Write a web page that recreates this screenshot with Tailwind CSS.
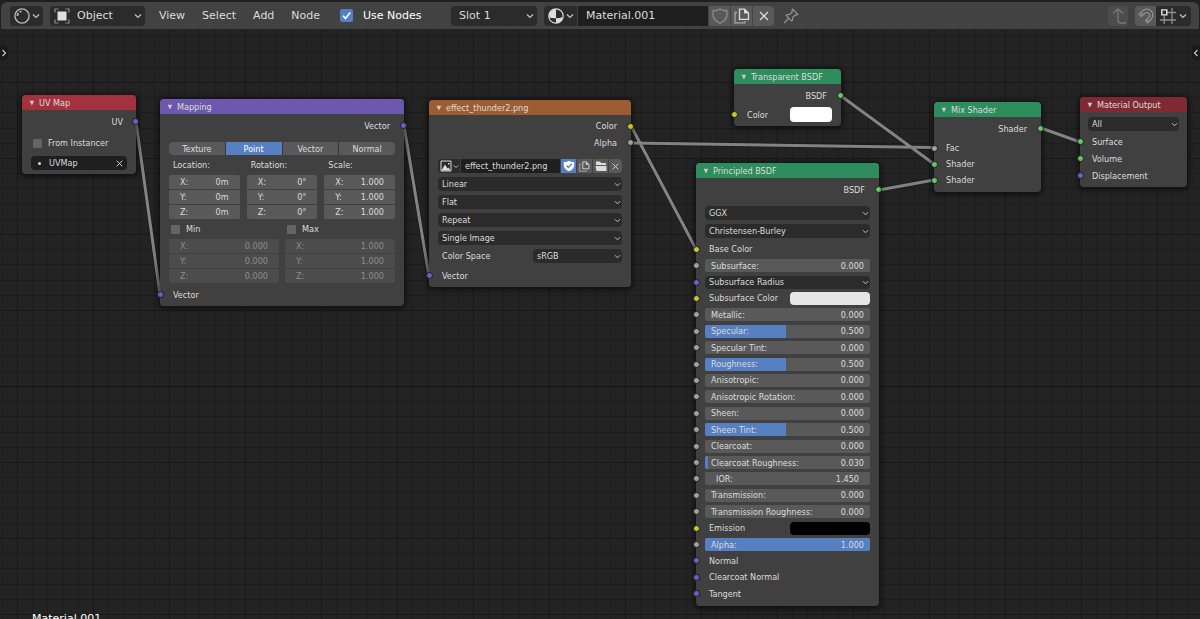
<!DOCTYPE html>
<html lang="en">
<head>
    <meta charset="UTF-8">
    <meta name="viewport" content="width=device-width, initial-scale=1.0">
    <title>Shader Editor</title>
    <script src="https://cdn.jsdelivr.net/npm/@tailwindcss/browser@4"></script>
</head>
<body class="h-screen flex flex-col overflow-hidden bg-[#1f1f1f] font-['DejaVu_Sans',sans-serif] text-[11px] leading-4 text-[#dcdcdc]">

    <!-- shared icons -->
    <svg class="hidden">
        <symbol id="chev" viewBox="0 0 8 6"><path d="M1 1.5 4 4.5 7 1.5" fill="none" stroke="#c4c4c4" stroke-width="1.2"/></symbol>
        <symbol id="tri" viewBox="0 0 6 6"><path d="M.6.8h4.6L2.9 5.4z" fill="currentColor"/></symbol>
        <symbol id="cross" viewBox="0 0 10 10"><path d="M1 1 9 9M9 1 1 9" fill="none" stroke="currentColor" stroke-width="1.3"/></symbol>
        <symbol id="copy" viewBox="0 0 16 16"><path d="M5.5 1.2h5l4 3.8v6.3h-9z" fill="none" stroke="currentColor" stroke-width="1.3"/><path d="M10 1v4.6h4.6z" fill="currentColor"/><path d="M3.2 4.5H1v10.3h9.8v-1.6" fill="none" stroke="#a8a8a8" stroke-width="1.3"/></symbol>
        <symbol id="shield" viewBox="0 0 16 16"><path d="M8 .9C6.200 2.300 3.600 2.800 1.100 2.700v4.400c0 3.600 2.900 6.600 6.900 8 4-1.400 6.900-4.400 6.900-8V2.700C12.400 2.800 9.800 2.300 8 .9z"/></symbol>
    </svg>

    <header class="mt-[2px] ml-px mr-px h-[27px] shrink-0 flex items-center pl-[9px] pr-2 rounded-t-md bg-[#424242]">
        <button aria-label="Editor type" class="h-5 w-[33px] flex items-center justify-center gap-[2px] rounded bg-[#2b2b2b]">
            <svg class="size-4" viewBox="0 0 16 16" fill="none" stroke="#b8b8b8"><circle cx="8" cy="8" r="7.1" stroke-width="1.4"/><path d="M3.400 8.100c0-1.300.4-2.200 1-3" stroke-width="1.700"/><path d="M5.800 4.100 7.500 3.300" stroke-width="1.700"/></svg>
            <svg class="w-2 h-[6px]"><use href="#chev"/></svg>
        </button>

        <div class="relative ml-[7px] w-[95px]">
            <svg class="absolute left-1 top-[2px] size-4 pointer-events-none" viewBox="0 0 16 16"><path d="M1 4.500V1h3.500M11.500 1H15v3.500M15 11.500V15h-3.500M4.500 15H1v-3.500" fill="none" stroke="#8c8c8c" stroke-width="1.200"/><path d="M3.500 3.500h9v9h-9z" fill="#dedede"/></svg>
            <select aria-label="Shader type" class="block appearance-none h-5 w-full pl-[27px] rounded bg-[#2b2b2b]"><option>Object</option></select>
            <svg class="absolute right-[3px] top-[7px] w-2 h-[6px] pointer-events-none"><use href="#chev"/></svg>
        </div>

        <nav class="ml-[14px] flex gap-[17px]">
            <button>View</button>
            <button>Select</button>
            <button>Add</button>
            <button>Node</button>
        </nav>

        <label class="ml-5 w-[111px] flex items-center gap-[10px] text-white">
            <span class="relative flex">
                <input type="checkbox" checked class="peer appearance-none size-[13px] rounded-xs bg-[#656565] checked:bg-[#5680c2]">
                <svg class="absolute inset-0 size-[13px] pointer-events-none" viewBox="0 0 13 13"><path d="M3 6.800 5.400 9.400 10.200 3.400" fill="none" stroke="white" stroke-width="1.600"/></svg>
            </span>
            Use Nodes
        </label>

        <div class="relative w-[86px]">
            <select aria-label="Slot" class="block appearance-none h-5 w-full pl-2 rounded bg-[#2b2b2b]"><option>Slot 1</option></select>
            <svg class="absolute right-[3px] top-[7px] w-2 h-[6px] pointer-events-none"><use href="#chev"/></svg>
        </div>

        <div class="ml-[7px] h-5 flex gap-px rounded overflow-hidden">
            <button aria-label="Browse material" class="w-[33px] flex items-center justify-center gap-[2px] bg-[#2b2b2b]">
                <svg class="size-4" viewBox="0 0 16 16"><circle cx="8" cy="8" r="7.200" fill="#2b2b2b" stroke="#dedede" stroke-width="1.200"/><path d="M8 1A7 7 0 0 0 1.400 9.500Q4 10.500 8 10.300zM8 10.300Q12 10.300 14.600 9A7 7 0 0 1 8 15z" fill="#dedede"/></svg>
                <svg class="w-2 h-[6px]"><use href="#chev"/></svg>
            </button>
            <input aria-label="Material name" value="Material.001" class="w-[130px] pl-2 bg-[#1f1f1f]">
            <button aria-label="Fake user" class="w-[21px] flex items-center justify-center bg-[#595959] text-[#8c8c8c]"><svg class="size-4 fill-none stroke-current stroke-[1.3]"><use href="#shield"/></svg></button>
            <button aria-label="New material" class="w-[21px] flex items-center justify-center bg-[#595959]"><svg class="size-4"><use href="#copy"/></svg></button>
            <button aria-label="Unlink material" class="w-[21px] flex items-center justify-center bg-[#595959]"><svg class="size-[10px]"><use href="#cross"/></svg></button>
        </div>

        <button aria-label="Pin" class="ml-[9px] text-[#8f8f8f]">
            <svg class="block size-4" viewBox="0 0 16 16" fill="none" stroke="currentColor" stroke-width="1.300"><path d="M9.700 1.200 14.800 6.300 13.300 7.100 12.300 6.800 9.800 9.400 9.500 12.200 8.500 12.900 3.200 7.500 4 6.600 6.800 6.300 9.300 3.700 9 2.400zM5.800 10.200 1 15"/></svg>
        </button>

        <button aria-label="Parent node tree" class="ml-auto h-5 w-5 flex items-center justify-center rounded bg-[#4d4d4d] text-[#777]">
            <svg class="size-4" viewBox="0 0 16 16" fill="none" stroke="currentColor" stroke-width="1.300"><path d="M3 5.500 8 .9 13 5.500M8 1v11q0 3 3 3h5"/></svg>
        </button>
        <div class="ml-[7px] h-5 flex rounded overflow-hidden">
            <button aria-label="Snap" class="w-[21px] flex items-center justify-center bg-[#595959]">
                <svg class="size-4" viewBox="0 0 16 16" fill="none" stroke="#939393" stroke-width="1.200"><path d="M1.200 6.200 4.500 2.900C10-2.200 18.200 4.600 13.200 11L9.700 14.800 7.600 12.700 10.900 9.100C13 6.500 9.600 3.200 7 5.200L3.300 8.400z"/><path d="M8.800 11.400 11 13.500M3.100 4.300 5.200 6.700"/></svg>
            </button>
            <button aria-label="Snap target" class="w-[35px] flex items-center justify-center gap-[3px] bg-[#2b2b2b]">
                <svg class="size-4" viewBox="0 0 16 16" fill="none"><path d="M7 4.500h9M0 12h16M4.200 7.500V16M12 0v16" stroke="#8f8f8f" stroke-width="1.300"/><path d="M1.800 1.900h5v5h-5z" stroke="#e6e6e6" stroke-width="1.400"/></svg>
                <svg class="w-2 h-[6px]"><use href="#chev"/></svg>
            </button>
        </div>
    </header>

    <!-- node canvas -->
    <main class="relative flex-1 overflow-hidden bg-[#232323] font-['DejaVu_Sans_Condensed','DejaVu_Sans',sans-serif] text-[9px] leading-3">
        <svg class="absolute inset-0 w-full h-full">
            <defs>
                <pattern id="grid" x="17" y="53" width="76" height="76" patternUnits="userSpaceOnUse">
                    <path d="M15.500 0v76M30.500 0v76M46.500 0v76M61.500 0v76M0 15.500h76M0 30.500h76M0 46.500h76M0 61.500h76" stroke="#1d1d1d"/>
                    <path d="M.5 0v76M0 .5h76" stroke="#181818"/>
                </pattern>
            </defs>
            <rect width="100%" height="100%" fill="url(#grid)"/>
            <path d="M0 357.500h1200" stroke="#141414"/>
            <!-- links: dark outline, then the wire -->
            <path d="M136 93 160 265M404 97 429 247M631 97 696 220M631 114 934 118.500M841 67 934 135M879 161 934 151M1041 99 1080 113" fill="none" stroke="#1a1a1a" stroke-width="4.500"/>
            <path d="M136 93 160 265M404 97 429 247M631 97 696 220M631 114 934 118.500M841 67 934 135M879 161 934 151M1041 99 1080 113" fill="none" stroke="#838383" stroke-width="3"/>
        </svg>

        <button aria-label="Show toolbar" class="absolute left-0 top-4 h-[15px] w-2 flex items-center rounded-r bg-[#1a1a1a]"><svg class="w-2 h-[6px] -rotate-90"><use href="#chev"/></svg></button>
        <button aria-label="Show sidebar" class="absolute right-0 top-4 h-[15px] w-2 flex items-center rounded-l bg-[#1a1a1a]"><svg class="w-2 h-[6px] rotate-90"><use href="#chev"/></svg></button>

        <!-- UV Map -->
        <section class="absolute left-[22px] top-[66px] w-[114px] pb-1 rounded bg-[#424242]/95 shadow-[0_1px_5px_2px_#0008]">
            <h2 class="h-[15px] flex items-center gap-1 pl-[7px] rounded-t bg-[#a3323e]"><svg class="size-[6px] text-[#ccc]"><use href="#tri"/></svg>UV Map</h2>
            <div class="relative h-[23px] flex items-center justify-end pr-[13px]">UV<i class="absolute -right-[3px] size-[7px] rounded-full border border-[#1c1c1c] bg-[#6363c7]"></i></div>
            <label class="h-5 flex items-center gap-[6px] pl-[11px]"><input type="checkbox" class="appearance-none size-[9px] rounded-[1px] bg-[#656565]">From Instancer</label>
            <div class="mt-[3px] mx-[9px] h-[14px] flex items-center rounded bg-[#1f1f1f] pl-[7px] pr-1">
                <span class="size-[3px] rounded-full bg-[#ddd]"></span>
                <input aria-label="UV map" value="UVMap" class="flex-1 min-w-0 pl-2">
                <button aria-label="Clear UV map"><svg class="block size-[7px]"><use href="#cross"/></svg></button>
            </div>
        </section>

        <!-- Mapping -->
        <section class="absolute left-[160px] top-[70px] w-[244px] rounded bg-[#424242]/95 shadow-[0_1px_5px_2px_#0008]">
            <h2 class="h-[15px] flex items-center gap-1 pl-[7px] rounded-t bg-[#6e58ad]"><svg class="size-[6px] text-[#ccc]"><use href="#tri"/></svg>Mapping</h2>
            <div class="relative h-[23px] flex items-center justify-end pr-[14px]">Vector<i class="absolute -right-[3px] size-[7px] rounded-full border border-[#1c1c1c] bg-[#6363c7]"></i></div>
            <div class="mt-[5px] mx-[9px] h-[13px] grid grid-cols-4 gap-px rounded overflow-hidden bg-[#383838]">
                <button class="bg-[#595959]">Texture</button>
                <button class="bg-[#5680c2] text-white">Point</button>
                <button class="bg-[#595959]">Vector</button>
                <button class="bg-[#595959]">Normal</button>
            </div>
            <div class="mx-[9px] grid grid-cols-3 gap-[7px]">
                <fieldset class="min-w-0">
                    <legend class="h-5 pl-1 leading-5">Location:</legend>
                    <div class="flex flex-col gap-px rounded-xs overflow-hidden">
                        <label class="h-[14px] flex items-center px-[11px] bg-[#595959]">X:<input value="0m" class="flex-1 min-w-0 text-right"></label>
                        <label class="h-[14px] flex items-center px-[11px] bg-[#595959]">Y:<input value="0m" class="flex-1 min-w-0 text-right"></label>
                        <label class="h-[14px] flex items-center px-[11px] bg-[#595959]">Z:<input value="0m" class="flex-1 min-w-0 text-right"></label>
                    </div>
                </fieldset>
                <fieldset class="min-w-0">
                    <legend class="h-5 pl-1 leading-5">Rotation:</legend>
                    <div class="flex flex-col gap-px rounded-xs overflow-hidden">
                        <label class="h-[14px] flex items-center px-[11px] bg-[#595959]">X:<input value="0°" class="flex-1 min-w-0 text-right"></label>
                        <label class="h-[14px] flex items-center px-[11px] bg-[#595959]">Y:<input value="0°" class="flex-1 min-w-0 text-right"></label>
                        <label class="h-[14px] flex items-center px-[11px] bg-[#595959]">Z:<input value="0°" class="flex-1 min-w-0 text-right"></label>
                    </div>
                </fieldset>
                <fieldset class="min-w-0">
                    <legend class="h-5 pl-1 leading-5">Scale:</legend>
                    <div class="flex flex-col gap-px rounded-xs overflow-hidden">
                        <label class="h-[14px] flex items-center px-[11px] bg-[#595959]">X:<input value="1.000" class="flex-1 min-w-0 text-right"></label>
                        <label class="h-[14px] flex items-center px-[11px] bg-[#595959]">Y:<input value="1.000" class="flex-1 min-w-0 text-right"></label>
                        <label class="h-[14px] flex items-center px-[11px] bg-[#595959]">Z:<input value="1.000" class="flex-1 min-w-0 text-right"></label>
                    </div>
                </fieldset>
            </div>
            <div class="mx-[9px] grid grid-cols-2 gap-x-[6px]">
                <div>
                    <label class="h-5 flex items-center gap-[6px] pl-[2px]"><input type="checkbox" class="appearance-none size-[9px] rounded-[1px] bg-[#656565]">Min</label>
                    <div class="flex flex-col gap-px rounded-xs overflow-hidden text-[#8c8c8c]">
                        <label class="h-[14px] flex items-center px-[11px] bg-[#4c4c4c]">X:<input disabled value="0.000" class="flex-1 min-w-0 text-right"></label>
                        <label class="h-[14px] flex items-center px-[11px] bg-[#4c4c4c]">Y:<input disabled value="0.000" class="flex-1 min-w-0 text-right"></label>
                        <label class="h-[14px] flex items-center px-[11px] bg-[#4c4c4c]">Z:<input disabled value="0.000" class="flex-1 min-w-0 text-right"></label>
                    </div>
                </div>
                <div>
                    <label class="h-5 flex items-center gap-[6px] pl-[2px]"><input type="checkbox" class="appearance-none size-[9px] rounded-[1px] bg-[#656565]">Max</label>
                    <div class="flex flex-col gap-px rounded-xs overflow-hidden text-[#8c8c8c]">
                        <label class="h-[14px] flex items-center px-[11px] bg-[#4c4c4c]">X:<input disabled value="1.000" class="flex-1 min-w-0 text-right"></label>
                        <label class="h-[14px] flex items-center px-[11px] bg-[#4c4c4c]">Y:<input disabled value="1.000" class="flex-1 min-w-0 text-right"></label>
                        <label class="h-[14px] flex items-center px-[11px] bg-[#4c4c4c]">Z:<input disabled value="1.000" class="flex-1 min-w-0 text-right"></label>
                    </div>
                </div>
            </div>
            <div class="relative h-[23px] flex items-center pl-[13px]"><i class="absolute -left-[3px] size-[7px] rounded-full border border-[#1c1c1c] bg-[#6363c7]"></i>Vector</div>
        </section>

        <!-- Image texture -->
        <section class="absolute left-[429px] top-[71px] w-[202px] pb-[3px] rounded bg-[#424242]/95 shadow-[0_1px_5px_2px_#0008]">
            <h2 class="h-[15px] flex items-center gap-1 pl-[7px] rounded-t bg-[#9c5d33]"><svg class="size-[6px] text-[#ccc]"><use href="#tri"/></svg>effect_thunder2.png</h2>
            <div class="pt-[3px]">
                <div class="relative h-4 flex items-center justify-end pr-[14px]">Color<i class="absolute -right-[3px] size-[7px] rounded-full border border-[#1c1c1c] bg-[#c7c729]"></i></div>
                <div class="relative h-[17px] flex items-center justify-end pr-[14px]">Alpha<i class="absolute -right-[3px] size-[7px] rounded-full border border-[#1c1c1c] bg-[#a1a1a1]"></i></div>
            </div>
            <div class="mt-2 mx-[9px] flex flex-col gap-1">
                <div class="h-[14px] flex gap-px rounded overflow-hidden">
                    <button aria-label="Browse image" class="w-[22px] flex items-center justify-center gap-px bg-[#2b2b2b]">
                        <svg class="size-3" viewBox="0 0 12 12"><path d="M1 1h10v10H1z" fill="none" stroke="#ddd"/><path d="M1.500 10.500 5 4.500 7.500 8.500 8.500 7.500 10.500 10.500zM8 3h1.500v1.500H8z" fill="#ddd"/></svg>
                        <svg class="w-[6px] h-[5px]"><use href="#chev"/></svg>
                    </button>
                    <input aria-label="Image name" value="effect_thunder2.png" class="flex-1 min-w-0 pl-1 bg-[#1f1f1f]">
                    <button aria-label="Fake user" class="w-[15px] flex items-center justify-center bg-[#5680c2] text-white"><svg class="size-3 fill-current" viewBox="0 0 12 12"><use href="#shield" width="12" height="12"/><path d="M3.500 5.500 5.400 7.500 8.700 3.700" fill="none" stroke="#5680c2" stroke-width="1.300"/></svg></button>
                    <button aria-label="New image" class="w-[15px] flex items-center justify-center bg-[#595959]"><svg class="size-[11px]"><use href="#copy"/></svg></button>
                    <button aria-label="Open image" class="w-[15px] flex items-center justify-center bg-[#595959]"><svg class="size-3" viewBox="0 0 12 12"><path d="M1 5V1.500h4L6 3h5v2zM.5 6h11v5h-10z" fill="#ddd"/></svg></button>
                    <button aria-label="Unlink image" class="w-[13px] flex items-center justify-center bg-[#595959]"><svg class="size-[7px]"><use href="#cross"/></svg></button>
                </div>
                <div class="relative">
                    <select aria-label="Interpolation" class="block appearance-none h-[14px] w-full pl-1 rounded bg-[#2b2b2b]"><option>Linear</option></select>
                    <svg class="absolute right-[1px] top-[5px] w-[7px] h-[5px] pointer-events-none"><use href="#chev"/></svg>
                </div>
                <div class="relative">
                    <select aria-label="Projection" class="block appearance-none h-[14px] w-full pl-1 rounded bg-[#2b2b2b]"><option>Flat</option></select>
                    <svg class="absolute right-[1px] top-[5px] w-[7px] h-[5px] pointer-events-none"><use href="#chev"/></svg>
                </div>
                <div class="relative">
                    <select aria-label="Extension" class="block appearance-none h-[14px] w-full pl-1 rounded bg-[#2b2b2b]"><option>Repeat</option></select>
                    <svg class="absolute right-[1px] top-[5px] w-[7px] h-[5px] pointer-events-none"><use href="#chev"/></svg>
                </div>
                <div class="relative">
                    <select aria-label="Source" class="block appearance-none h-[14px] w-full pl-1 rounded bg-[#2b2b2b]"><option>Single Image</option></select>
                    <svg class="absolute right-[1px] top-[5px] w-[7px] h-[5px] pointer-events-none"><use href="#chev"/></svg>
                </div>
                <div class="flex items-center justify-between pl-1">
                    <label for="colorspace">Color Space</label>
                    <div class="relative w-[89px]">
                        <select id="colorspace" class="block appearance-none h-[14px] w-full pl-1 rounded bg-[#2b2b2b]"><option>sRGB</option></select>
                        <svg class="absolute right-[1px] top-[5px] w-[7px] h-[5px] pointer-events-none"><use href="#chev"/></svg>
                    </div>
                </div>
            </div>
            <div class="relative mt-1 h-[17px] flex items-center pl-[13px]"><i class="absolute -left-[3px] size-[7px] rounded-full border border-[#1c1c1c] bg-[#6363c7]"></i>Vector</div>
        </section>

        <!-- Transparent BSDF -->
        <section class="absolute left-[734px] top-[40px] w-[107px] pb-1 rounded bg-[#424242]/95 shadow-[0_1px_5px_2px_#0008]">
            <h2 class="h-[15px] flex items-center gap-1 pl-[7px] rounded-t bg-[#2d8d5c]"><svg class="size-[6px] text-[#ccc]"><use href="#tri"/></svg>Transparent BSDF</h2>
            <div class="relative h-[23px] flex items-center justify-end pr-[14px]">BSDF<i class="absolute -right-[3px] size-[7px] rounded-full border border-[#1c1c1c] bg-[#63c763]"></i></div>
            <div class="relative h-[15px] flex items-center justify-between pl-[13px] pr-[9px]"><i class="absolute -left-[3px] size-[7px] rounded-full border border-[#1c1c1c] bg-[#c7c729]"></i>Color<button aria-label="Pick color" class="w-[42px] h-[15px] rounded bg-white"></button></div>
        </section>

        <!-- Principled BSDF -->
        <section class="absolute left-[696px] top-[134px] w-[183px] pb-1 rounded bg-[#424242]/95 shadow-[0_1px_5px_2px_#0008]">
            <h2 class="h-[15px] flex items-center gap-1 pl-[7px] rounded-t bg-[#2d8d5c]"><svg class="size-[6px] text-[#ccc]"><use href="#tri"/></svg>Principled BSDF</h2>
            <div class="relative h-[23px] flex items-center justify-end pr-[14px]">BSDF<i class="absolute -right-[3px] size-[7px] rounded-full border border-[#1c1c1c] bg-[#63c763]"></i></div>
            <div class="mt-[5px] mb-[3px] mx-[9px] flex flex-col gap-1">
                <div class="relative">
                    <select aria-label="Distribution" class="block appearance-none h-[14px] w-full pl-1 rounded bg-[#2b2b2b]"><option>GGX</option></select>
                    <svg class="absolute right-[1px] top-[5px] w-[7px] h-[5px] pointer-events-none"><use href="#chev"/></svg>
                </div>
                <div class="relative">
                    <select aria-label="Subsurface method" class="block appearance-none h-[14px] w-full pl-1 rounded bg-[#2b2b2b]"><option>Christensen-Burley</option></select>
                    <svg class="absolute right-[1px] top-[5px] w-[7px] h-[5px] pointer-events-none"><use href="#chev"/></svg>
                </div>
            </div>
            <!-- socket rows share the height equally -->
            <div id="inputs" class="h-[361px] grid grid-cols-1 auto-rows-fr"></div>
        </section>

        <!-- Mix Shader -->
        <section class="absolute left-[934px] top-[73px] w-[107px] pb-1 rounded bg-[#424242]/95 shadow-[0_1px_5px_2px_#0008]">
            <h2 class="h-[15px] flex items-center gap-1 pl-[7px] rounded-t bg-[#2d8d5c]"><svg class="size-[6px] text-[#ccc]"><use href="#tri"/></svg>Mix Shader</h2>
            <div class="relative h-[23px] flex items-center justify-end pr-[14px]">Shader<i class="absolute -right-[3px] size-[7px] rounded-full border border-[#1c1c1c] bg-[#63c763]"></i></div>
            <div class="relative h-4 flex items-center pl-3"><i class="absolute -left-[3px] size-[7px] rounded-full border border-[#1c1c1c] bg-[#a1a1a1]"></i>Fac</div>
            <div class="relative h-4 flex items-center pl-3"><i class="absolute -left-[3px] size-[7px] rounded-full border border-[#1c1c1c] bg-[#63c763]"></i>Shader</div>
            <div class="relative h-4 flex items-center pl-3"><i class="absolute -left-[3px] size-[7px] rounded-full border border-[#1c1c1c] bg-[#63c763]"></i>Shader</div>
        </section>

        <!-- Material Output -->
        <section class="absolute left-[1080px] top-[68px] w-[107px] pb-[3px] rounded bg-[#424242]/95 shadow-[0_1px_5px_2px_#0008]">
            <h2 class="h-[15px] flex items-center gap-1 pl-[7px] rounded-t bg-[#7f2a33]"><svg class="size-[6px] text-[#ccc]"><use href="#tri"/></svg>Material Output</h2>
            <div class="relative mt-[5px] mb-[2px] mx-2">
                <select aria-label="Target" class="block appearance-none h-[14px] w-full pl-1 rounded bg-[#2b2b2b]"><option>All</option></select>
                <svg class="absolute right-[1px] top-[5px] w-[7px] h-[5px] pointer-events-none"><use href="#chev"/></svg>
            </div>
            <div class="relative h-[17px] flex items-center pl-3"><i class="absolute -left-[3px] size-[7px] rounded-full border border-[#1c1c1c] bg-[#63c763]"></i>Surface</div>
            <div class="relative h-[17px] flex items-center pl-3"><i class="absolute -left-[3px] size-[7px] rounded-full border border-[#1c1c1c] bg-[#63c763]"></i>Volume</div>
            <div class="relative h-[17px] flex items-center pl-3"><i class="absolute -left-[3px] size-[7px] rounded-full border border-[#1c1c1c] bg-[#6363c7]"></i>Displacement</div>
        </section>

        <p class="absolute left-8 -bottom-2 font-['DejaVu_Sans',sans-serif] text-[11px] leading-4 text-white">Material.001</p>
    </main>

    <script>
        const dots = {
            yellow: 'bg-[#c7c729]',
            gray: 'bg-[#a1a1a1]',
            blue: 'bg-[#6363c7]'
        };
        // [type, socket, label, value, fill %]
        const inputs = [
            ['text', 'yellow', 'Base Color'],
            ['slider', 'gray', 'Subsurface', '0.000', 0],
            ['select', 'blue', 'Subsurface Radius'],
            ['color', 'yellow', 'Subsurface Color', '#e6e6e6'],
            ['slider', 'gray', 'Metallic', '0.000', 0],
            ['slider', 'gray', 'Specular', '0.500', 49],
            ['slider', 'gray', 'Specular Tint', '0.000', 0],
            ['slider', 'gray', 'Roughness', '0.500', 49],
            ['slider', 'gray', 'Anisotropic', '0.000', 0],
            ['slider', 'gray', 'Anisotropic Rotation', '0.000', 0],
            ['slider', 'gray', 'Sheen', '0.000', 0],
            ['slider', 'gray', 'Sheen Tint', '0.500', 49],
            ['slider', 'gray', 'Clearcoat', '0.000', 0],
            ['slider', 'gray', 'Clearcoat Roughness', '0.030', 2],
            ['number', 'gray', 'IOR', '1.450', 0],
            ['slider', 'gray', 'Transmission', '0.000', 0],
            ['slider', 'gray', 'Transmission Roughness', '0.000', 0],
            ['color', 'yellow', 'Emission', '#000000'],
            ['slider', 'gray', 'Alpha', '1.000', 100],
            ['text', 'blue', 'Normal'],
            ['text', 'blue', 'Clearcoat Normal'],
            ['text', 'blue', 'Tangent']
        ];

        function control(type, label, value, fill) {
            if (type == 'text') return `<span class="pl-1">${label}</span>`;
            if (type == 'color') return `<span class="pl-1 flex-1">${label}</span><button aria-label="${label}" class="w-20 h-[13px] rounded" style="background:${value}"></button>`;
            if (type == 'select') return `<div class="relative w-full"><select aria-label="${label}" class="block appearance-none h-[13px] w-full pl-1 rounded bg-[#2b2b2b]"><option>${label}</option></select><svg class="absolute right-[1px] top-[4px] w-[7px] h-[5px] pointer-events-none"><use href="#chev"/></svg></div>`;
            const pad = type == 'number' ? 'px-[11px]' : 'px-[6px]';
            return `<label class="relative w-full h-[13px] flex items-center ${pad} rounded-xs overflow-hidden bg-[#595959]"><span class="absolute left-0 inset-y-0 bg-[#5680c2]" style="width:${fill}%"></span><span class="relative whitespace-nowrap">${label}:</span><input value="${value}" class="relative flex-1 min-w-0 text-right"></label>`;
        }

        document.getElementById('inputs').innerHTML = inputs.map(([type, dot, label, value, fill]) =>
            `<div class="relative flex items-center px-[9px]"><i class="absolute -left-[3px] size-[7px] rounded-full border border-[#1c1c1c] ${dots[dot]}"></i>${control(type, label, value, fill)}</div>`
        ).join('');
    </script>
</body>
</html>
